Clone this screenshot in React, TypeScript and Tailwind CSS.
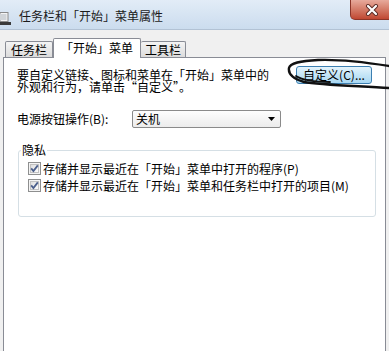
import React from "react";

function Check() {
  return (
    <svg width="13" height="13" viewBox="0 0 13 13" className="shrink-0">
      <defs>
        <linearGradient id="cbg" x1="0" y1="0" x2="1" y2="1">
          <stop offset="0" stopColor="#dcdcdc" />
          <stop offset="1" stopColor="#ffffff" />
        </linearGradient>
      </defs>
      <rect x="0.5" y="0.5" width="12" height="12" fill="#f4f4f4" stroke="#8e8f8f" />
      <rect x="2.5" y="2.5" width="8" height="8" fill="url(#cbg)" stroke="#c2c2c2" />
      <path d="M3.2 6.4 L5.4 9 L9.8 3.4" fill="none" stroke="#4b5f8c" strokeWidth="1.8" />
    </svg>
  );
}

export default function App() {
  return (
    <div className="relative w-[389px] h-[351px] overflow-hidden bg-[#f0f0f0] flex flex-col text-[12px] text-black font-['Noto_Sans_CJK_SC','Liberation_Sans',sans-serif]">
      {/* Title bar */}
      <div className="h-[30px] shrink-0 flex items-start bg-linear-to-b from-[#e2ecf7] to-[#cbdcee] border-b border-[#b2c2d4]">
        <svg width="12" height="14" viewBox="0 0 12 14" className="mt-[12px] shrink-0">
          <rect x="0" y="0.5" width="8" height="9" fill="#f4f4f4" stroke="#8a8a8a" />
          <rect x="0" y="2" width="6.5" height="6" fill="#d0d4d8" />
          <rect x="0" y="10" width="11" height="3" fill="#3a3a3a" />
        </svg>
        <span className="ml-[7px] mt-[8px] leading-[16px] text-[#1b1b1b]">任务栏和「开始」菜单属性</span>
        <div className="ml-auto -mr-[4px] w-[43px] h-[20px] shrink-0 rounded-bl-[5px] border border-t-0 border-[#8c3528] bg-linear-to-b from-[#e7aa9c] via-[#d37a67] to-[#c04732] flex items-center justify-center">
          <svg width="14" height="12" viewBox="0 0 14 12">
            <path d="M3 2 L11 10 M11 2 L3 10" stroke="#5a2a24" strokeWidth="4" strokeLinecap="round" />
            <path d="M3 2 L11 10 M11 2 L3 10" stroke="#ffffff" strokeWidth="2.2" strokeLinecap="round" />
          </svg>
        </div>
      </div>

      {/* Tabs */}
      <div className="h-[27px] shrink-0 flex items-end pl-[5px] relative z-10">
        <div className="h-[16px] px-[5px] border border-b-0 border-[#898c95] rounded-t-[2px] bg-linear-to-b from-[#f4f4f4] to-[#dcdcdc] leading-[16px]">任务栏</div>
        <div className="h-[20px] -mb-px px-[7px] border border-b-0 border-[#898c95] rounded-t-[2px] bg-white leading-[17px]">「开始」菜单</div>
        <div className="h-[16px] px-[4px] border border-b-0 border-l-0 border-[#898c95] rounded-t-[2px] bg-linear-to-b from-[#f4f4f4] to-[#dcdcdc] leading-[16px]">工具栏</div>
      </div>

      {/* Panel */}
      <div className="flex-1 mx-[3px] border border-b-0 border-[#898c95] bg-white pl-[13px] pr-[13px] pt-[11px] flex flex-col">
        <div className="flex items-start">
          <div className="flex flex-col">
            <div className="h-[12px] leading-[12px]">要自定义链接、图标和菜单在「开始」菜单中的</div>
            <div className="h-[12px] leading-[12px]">外观和行为，请单击“自定义”。</div>
          </div>
          <div className="ml-auto -mt-[3px] w-[76px] h-[18px] rounded-[3px] border border-[#3c7fb1] bg-linear-to-b from-[#e5f4fc] via-[#c4e5f6] to-[#a9d8f3] flex items-center justify-center leading-[16px]">
            自定义(C)...
          </div>
        </div>

        <div className="mt-[17px] h-[18px] flex items-center">
          <div className="w-[115px] leading-[12px]">电源按钮操作(B):</div>
          <div className="w-[149px] h-[18px] rounded-[2px] border border-[#8a8a8a] bg-linear-to-b from-[#fdfdfd] to-[#ececec] flex items-center pl-[3px] pr-[5px] leading-[16px]">
            <span>关机</span>
            <svg width="7" height="4" viewBox="0 0 7 4" className="ml-auto">
              <path d="M0 0 L7 0 L3.5 4 Z" fill="#000" />
            </svg>
          </div>
        </div>

        <fieldset className="mt-[16px] ml-[1px] w-[358px] border border-[#d5dfe5] rounded-[3px] pl-[9px] pt-[4px] pb-[22px]">
          <legend className="-ml-[7px] px-[1px] leading-[12px]">隐私</legend>
          <div className="h-[17px] flex items-center">
            <Check />
            <span className="ml-[2px] leading-[12px]">存储并显示最近在「开始」菜单中打开的程序(P)</span>
          </div>
          <div className="h-[17px] flex items-center">
            <Check />
            <span className="ml-[2px] leading-[12px]">存储并显示最近在「开始」菜单和任务栏中打开的项目(M)</span>
          </div>
        </fieldset>
      </div>

      {/* Hand-drawn scribble */}
      <svg className="absolute left-0 top-0 pointer-events-none" width="389" height="351" viewBox="0 0 389 351">
        <path
          d="M389 66 C370 63 345 59 318 60 C300 61 290 63 289 68 C288 74 294 79 304 82 C320 85 360 86 389 88"
          fill="none"
          stroke="#111"
          strokeWidth="2.4"
          strokeLinecap="round"
        />
        <path
          d="M296 76 C302 80 315 82 330 82"
          fill="none"
          stroke="#111"
          strokeWidth="1.8"
          strokeLinecap="round"
        />
      </svg>
    </div>
  );
}
